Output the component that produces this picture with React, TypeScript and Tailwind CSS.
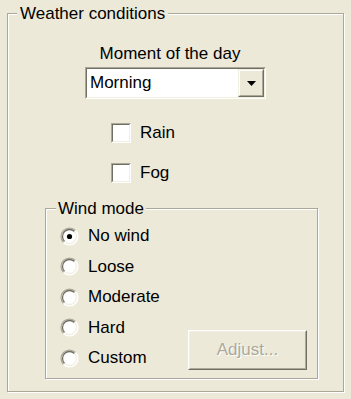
import React from "react";

const font = "font-['Liberation_Sans',Arial,sans-serif]";

function Radio({ checked }: { checked?: boolean }) {
  return (
    <svg width="19" height="19" viewBox="0 0 19 19" className="shrink-0">
      <circle cx="9.5" cy="9.5" r="8.5" fill="#fff" />
      <path d="M3.49 15.51 A8.5 8.5 0 0 1 15.51 3.49" fill="none" stroke="#aca899" strokeWidth="1.3" />
      <path d="M15.51 3.49 A8.5 8.5 0 0 1 3.49 15.51" fill="none" stroke="#fff" strokeWidth="1.3" />
      <path d="M4.55 14.45 A7 7 0 0 1 14.45 4.55" fill="none" stroke="#716f64" strokeWidth="1.3" />
      <path d="M14.45 4.55 A7 7 0 0 1 4.55 14.45" fill="none" stroke="#f1efe2" strokeWidth="1.3" />
      {checked && <circle cx="9.5" cy="9.5" r="2.6" fill="#000" />}
    </svg>
  );
}

function Checkbox({ label }: { label: string }) {
  return (
    <div className="ml-[103px] mt-[20px] h-[20px] flex items-center gap-[9px]">
      <div className="w-[20px] h-[20px] border border-t-[#aca899] border-l-[#aca899] border-b-white border-r-white">
        <div className="w-full h-full bg-white border border-t-[#716f64] border-l-[#716f64] border-b-[#f1efe2] border-r-[#f1efe2]" />
      </div>
      <span>{label}</span>
    </div>
  );
}

const winds = ["No wind", "Loose", "Moderate", "Hard", "Custom"];

export default function App() {
  return (
    <div className={`w-[351px] h-[399px] bg-[#ece9d8] pt-[13px] pl-[7px] text-[17px] leading-[20px] text-black ${font}`}>
      <div className="w-[337px] h-[379px] border border-[#aca899] shadow-[inset_1px_1px_0_#fff,1px_1px_0_#fff] flex flex-col">
        <div className="-mt-[10px] ml-[9px] px-[3px] w-fit bg-[#ece9d8]">Weather conditions</div>

        <div className="mt-[20px] flex justify-center pr-[11px]">Moment of the day</div>

        {/* combo box */}
        <div className="mt-[3px] ml-[77px] w-[181px] h-[32px] border border-t-[#aca899] border-l-[#aca899] border-b-white border-r-white">
          <div className="w-full h-full bg-white border border-t-[#716f64] border-l-[#716f64] border-b-[#f1efe2] border-r-[#f1efe2] flex items-center">
            <span className="flex-1 pl-[3px]">Morning</span>
            <div className="w-[26px] h-full border border-t-[#f1efe2] border-l-[#f1efe2] border-b-[#716f64] border-r-[#716f64] bg-[#ece9d8]">
              <div className="w-full h-full border border-t-white border-l-white border-b-[#aca899] border-r-[#aca899] flex items-center justify-center">
                <svg width="9" height="5" viewBox="0 0 9 5">
                  <path d="M0 0 H9 L4.5 5 Z" fill="#000" />
                </svg>
              </div>
            </div>
          </div>
        </div>

        <div className="mt-[4px]" />
        <Checkbox label="Rain" />
        <Checkbox label="Fog" />

        {/* wind mode group */}
        <div className="mt-[25px] ml-[37px] w-[273px] h-[171px] border border-[#aca899] shadow-[inset_1px_1px_0_#fff,1px_1px_0_#fff] flex flex-col">
          <div className="-mt-[10px] ml-[10px] px-[2px] w-fit bg-[#ece9d8]">Wind mode</div>
          <div className="flex-1 flex pl-[14px]">
            <div className="w-[128px] mt-[2px] flex flex-col">
              {winds.map((w, i) => (
                <div key={w} className="h-[30.5px] flex items-center gap-[9px]">
                  <Radio checked={i === 0} />
                  <span>{w}</span>
                </div>
              ))}
            </div>
            <div className="self-end mb-[8px] w-[119px] h-[40px] border border-t-white border-l-white border-b-[#716f64] border-r-[#716f64]">
              <div className="w-full h-full border border-t-[#f1efe2] border-l-[#f1efe2] border-b-[#aca899] border-r-[#aca899] flex items-center justify-center text-[#aca899] [text-shadow:1px_1px_0_#fff]">
                Adjust...
              </div>
            </div>
          </div>
        </div>
      </div>
    </div>
  );
}
